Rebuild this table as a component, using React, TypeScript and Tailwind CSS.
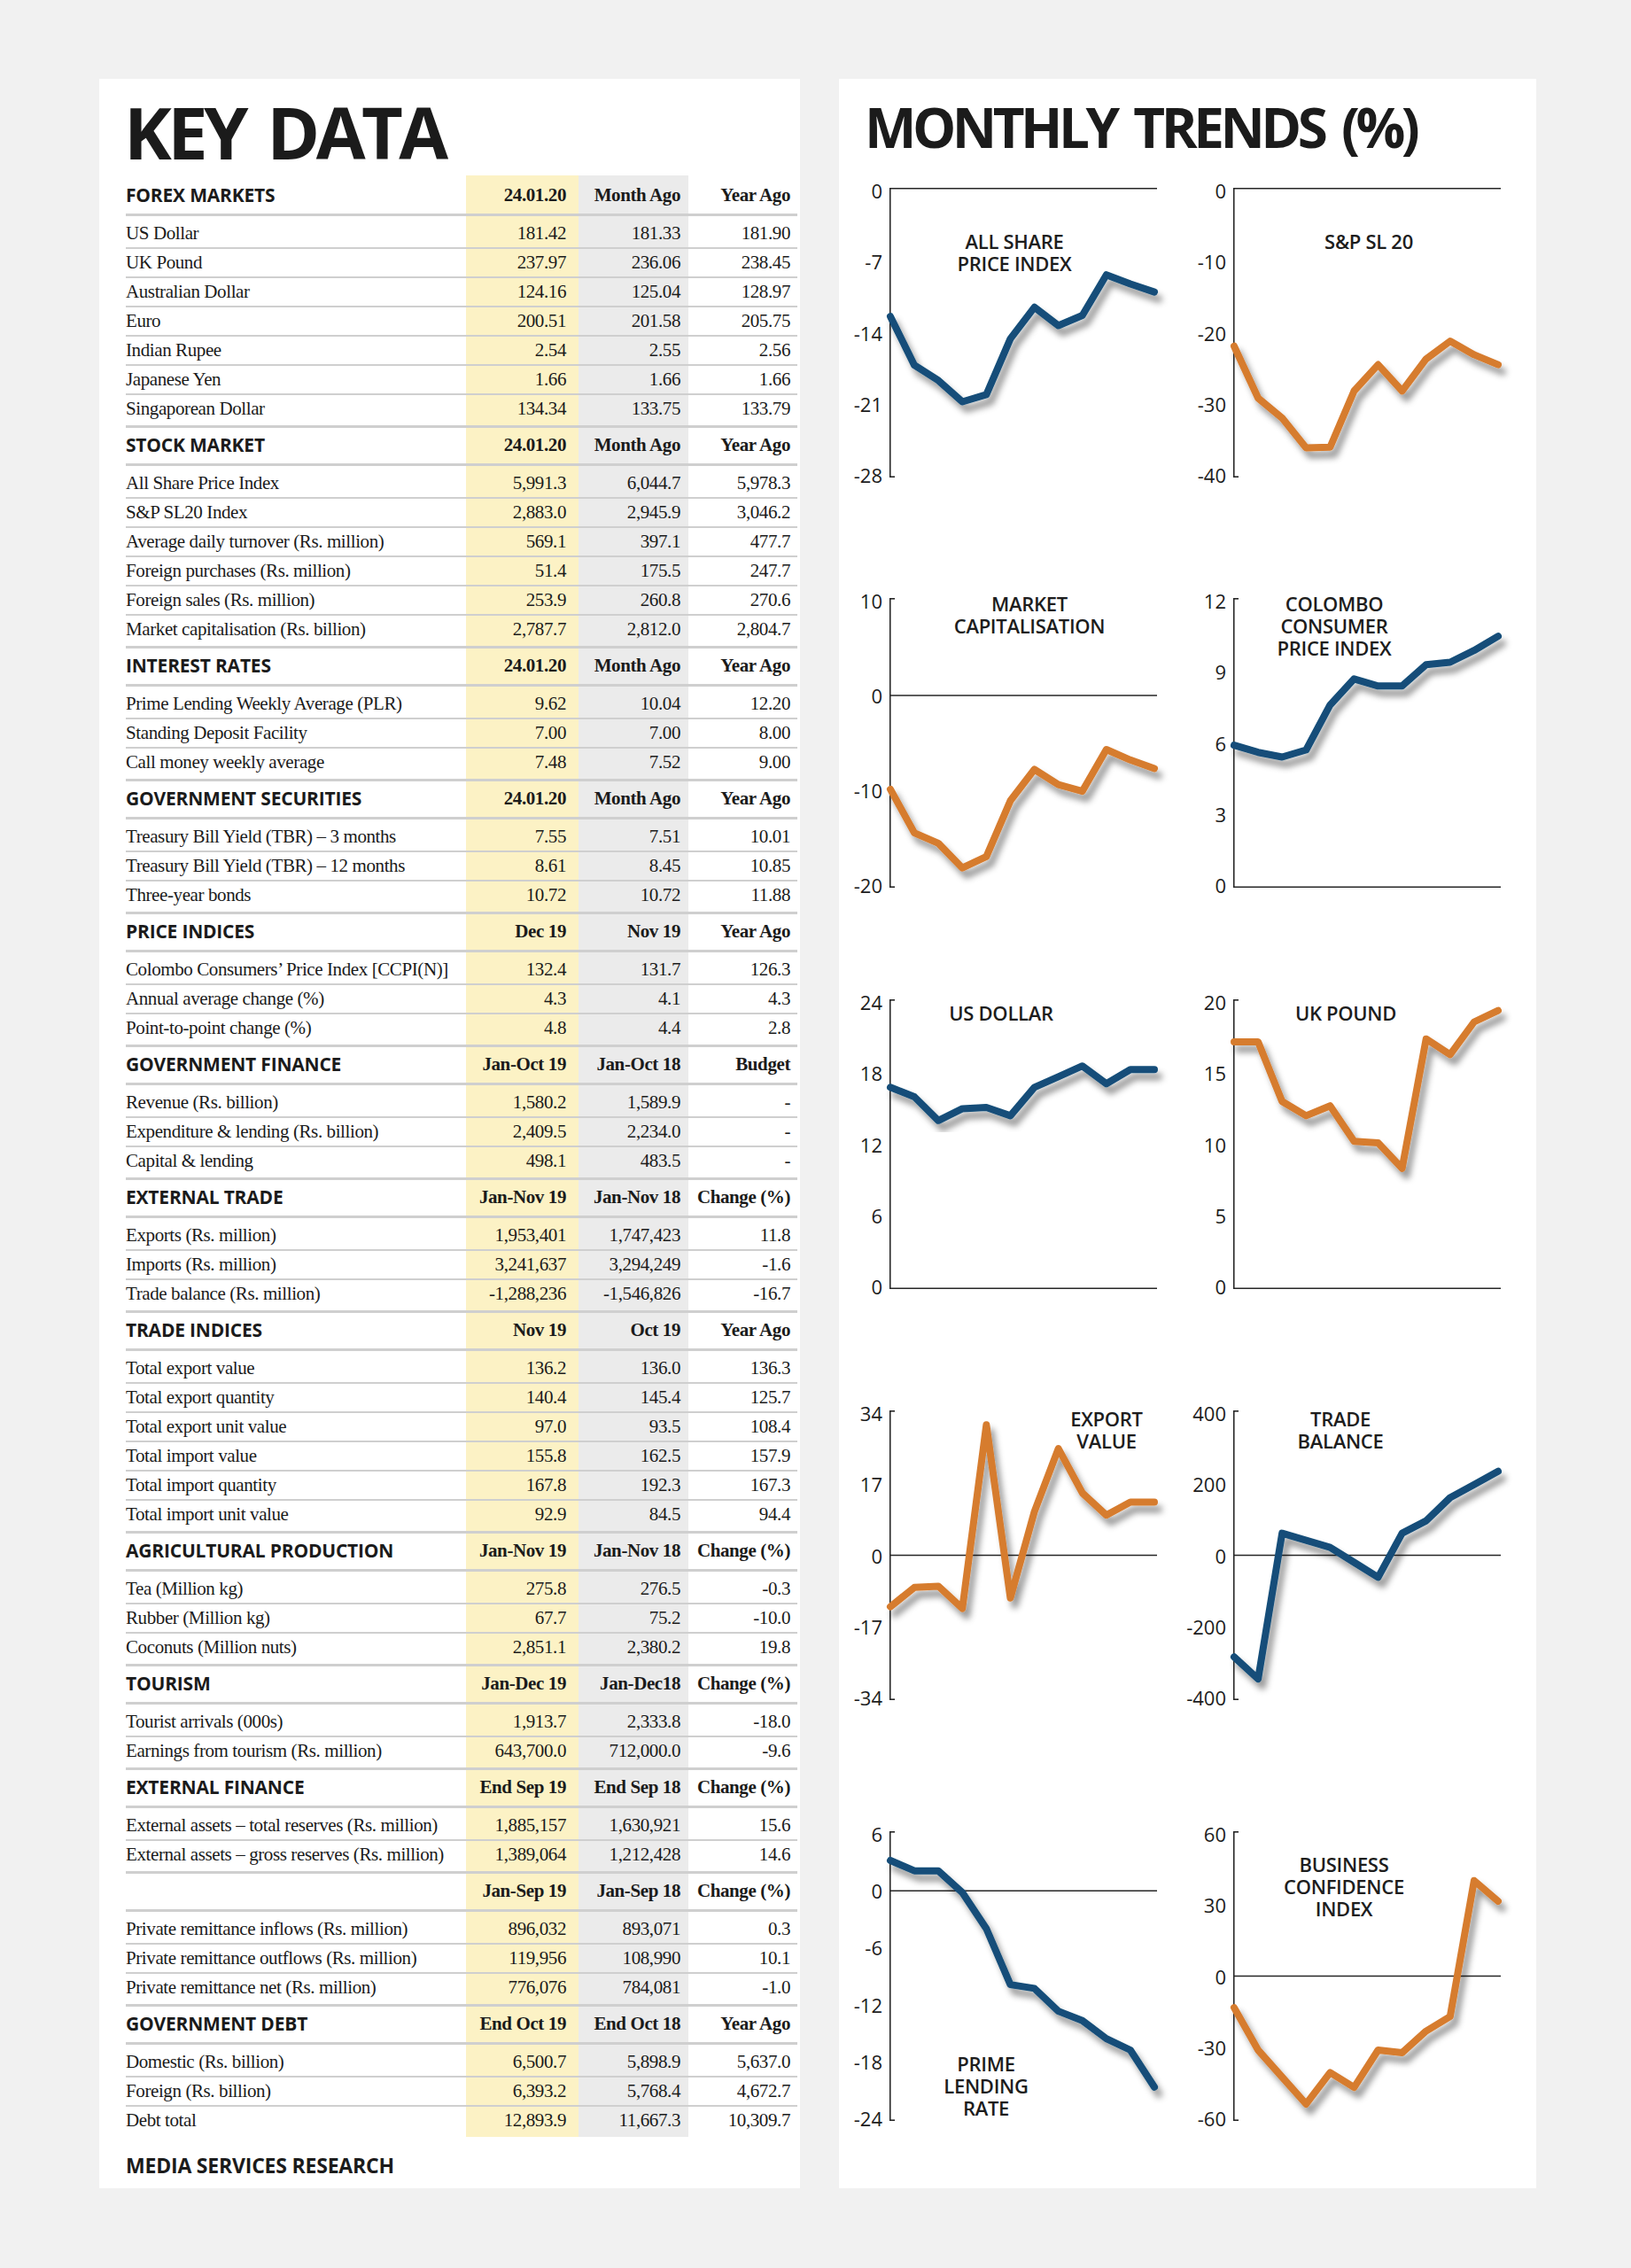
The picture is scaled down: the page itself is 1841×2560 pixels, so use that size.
import React from 'react';

type Row = [string, string, string, string];

interface Section {
  title: string;
  cols: [string, string, string];
  rows: Row[];
}

interface Trend {
  title: string[];
  tx: number;
  ty: number;
  ticks: number[];
  color: string;
  values: number[];
}

const BLUE = '#134e79';
const ORANGE = '#d67b2e';

const SECTIONS: Section[] = [
  {
    title: 'FOREX MARKETS',
    cols: ['24.01.20', 'Month Ago', 'Year Ago'],
    rows: [
      ['US Dollar', '181.42', '181.33', '181.90'],
      ['UK Pound', '237.97', '236.06', '238.45'],
      ['Australian Dollar', '124.16', '125.04', '128.97'],
      ['Euro', '200.51', '201.58', '205.75'],
      ['Indian Rupee', '2.54', '2.55', '2.56'],
      ['Japanese Yen', '1.66', '1.66', '1.66'],
      ['Singaporean Dollar', '134.34', '133.75', '133.79'],
    ],
  },
  {
    title: 'STOCK MARKET',
    cols: ['24.01.20', 'Month Ago', 'Year Ago'],
    rows: [
      ['All Share Price Index', '5,991.3', '6,044.7', '5,978.3'],
      ['S&P SL20 Index', '2,883.0', '2,945.9', '3,046.2'],
      ['Average daily turnover (Rs. million)', '569.1', '397.1', '477.7'],
      ['Foreign purchases (Rs. million)', '51.4', '175.5', '247.7'],
      ['Foreign sales (Rs. million)', '253.9', '260.8', '270.6'],
      ['Market capitalisation (Rs. billion)', '2,787.7', '2,812.0', '2,804.7'],
    ],
  },
  {
    title: 'INTEREST RATES',
    cols: ['24.01.20', 'Month Ago', 'Year Ago'],
    rows: [
      ['Prime Lending Weekly Average (PLR)', '9.62', '10.04', '12.20'],
      ['Standing Deposit Facility', '7.00', '7.00', '8.00'],
      ['Call money weekly average', '7.48', '7.52', '9.00'],
    ],
  },
  {
    title: 'GOVERNMENT SECURITIES',
    cols: ['24.01.20', 'Month Ago', 'Year Ago'],
    rows: [
      ['Treasury Bill Yield (TBR) – 3 months', '7.55', '7.51', '10.01'],
      ['Treasury Bill Yield (TBR) – 12 months', '8.61', '8.45', '10.85'],
      ['Three-year bonds', '10.72', '10.72', '11.88'],
    ],
  },
  {
    title: 'PRICE INDICES',
    cols: ['Dec 19', 'Nov 19', 'Year Ago'],
    rows: [
      ['Colombo Consumers’ Price Index [CCPI(N)]', '132.4', '131.7', '126.3'],
      ['Annual average change (%)', '4.3', '4.1', '4.3'],
      ['Point-to-point change (%)', '4.8', '4.4', '2.8'],
    ],
  },
  {
    title: 'GOVERNMENT FINANCE',
    cols: ['Jan-Oct 19', 'Jan-Oct 18', 'Budget'],
    rows: [
      ['Revenue (Rs. billion)', '1,580.2', '1,589.9', '-'],
      ['Expenditure & lending (Rs. billion)', '2,409.5', '2,234.0', '-'],
      ['Capital & lending', '498.1', '483.5', '-'],
    ],
  },
  {
    title: 'EXTERNAL TRADE',
    cols: ['Jan-Nov 19', 'Jan-Nov 18', 'Change (%)'],
    rows: [
      ['Exports (Rs. million)', '1,953,401', '1,747,423', '11.8'],
      ['Imports (Rs. million)', '3,241,637', '3,294,249', '-1.6'],
      ['Trade balance (Rs. million)', '-1,288,236', '-1,546,826', '-16.7'],
    ],
  },
  {
    title: 'TRADE INDICES',
    cols: ['Nov 19', 'Oct 19', 'Year Ago'],
    rows: [
      ['Total export value', '136.2', '136.0', '136.3'],
      ['Total export quantity', '140.4', '145.4', '125.7'],
      ['Total export unit value', '97.0', '93.5', '108.4'],
      ['Total import value', '155.8', '162.5', '157.9'],
      ['Total import quantity', '167.8', '192.3', '167.3'],
      ['Total import unit value', '92.9', '84.5', '94.4'],
    ],
  },
  {
    title: 'AGRICULTURAL PRODUCTION',
    cols: ['Jan-Nov 19', 'Jan-Nov 18', 'Change (%)'],
    rows: [
      ['Tea (Million kg)', '275.8', '276.5', '-0.3'],
      ['Rubber (Million kg)', '67.7', '75.2', '-10.0'],
      ['Coconuts (Million nuts)', '2,851.1', '2,380.2', '19.8'],
    ],
  },
  {
    title: 'TOURISM',
    cols: ['Jan-Dec 19', 'Jan-Dec18', 'Change (%)'],
    rows: [
      ['Tourist arrivals (000s)', '1,913.7', '2,333.8', '-18.0'],
      ['Earnings from tourism (Rs. million)', '643,700.0', '712,000.0', '-9.6'],
    ],
  },
  {
    title: 'EXTERNAL FINANCE',
    cols: ['End Sep 19', 'End Sep 18', 'Change (%)'],
    rows: [
      ['External assets – total reserves (Rs. million)', '1,885,157', '1,630,921', '15.6'],
      ['External assets – gross reserves (Rs. million)', '1,389,064', '1,212,428', '14.6'],
    ],
  },
  {
    title: '',
    cols: ['Jan-Sep 19', 'Jan-Sep 18', 'Change (%)'],
    rows: [
      ['Private remittance inflows (Rs. million)', '896,032', '893,071', '0.3'],
      ['Private remittance outflows (Rs. million)', '119,956', '108,990', '10.1'],
      ['Private remittance net (Rs. million)', '776,076', '784,081', '-1.0'],
    ],
  },
  {
    title: 'GOVERNMENT DEBT',
    cols: ['End Oct 19', 'End Oct 18', 'Year Ago'],
    rows: [
      ['Domestic (Rs. billion)', '6,500.7', '5,898.9', '5,637.0'],
      ['Foreign (Rs. billion)', '6,393.2', '5,768.4', '4,672.7'],
      ['Debt total', '12,893.9', '11,667.3', '10,309.7'],
    ],
  },
];

// two charts per row, left then right
const TRENDS: Trend[][] = [
  [
    {
      title: ['ALL SHARE', 'PRICE INDEX'], tx: 198, ty: 48, ticks: [0, -7, -14, -21, -28], color: BLUE,
      values: [-12.4, -17.2, -18.7, -20.8, -20.1, -14.6, -11.5, -13.3, -12.3, -8.3, -9.2, -10.0],
    },
    {
      title: ['S&P SL 20'], tx: 210, ty: 48, ticks: [0, -10, -20, -30, -40], color: ORANGE,
      values: [-21.9, -29.2, -32.0, -36.2, -36.1, -28.2, -24.5, -28.2, -23.7, -21.2, -23.1, -24.5],
    },
  ],
  [
    {
      title: ['MARKET', 'CAPITALISATION'], tx: 215, ty: -6, ticks: [10, 0, -10, -20], color: ORANGE,
      values: [-9.9, -14.5, -15.6, -18.2, -17.0, -11.1, -7.8, -9.4, -10.1, -5.7, -6.8, -7.7],
    },
    {
      title: ['COLOMBO', 'CONSUMER', 'PRICE INDEX'], tx: 171, ty: -6, ticks: [12, 9, 6, 3, 0], color: BLUE,
      values: [5.9, 5.6, 5.4, 5.7, 7.6, 8.7, 8.4, 8.4, 9.3, 9.4, 9.9, 10.5],
    },
  ],
  [
    {
      title: ['US DOLLAR'], tx: 183, ty: 3, ticks: [24, 18, 12, 6, 0], color: BLUE,
      values: [16.8, 16.0, 14.0, 15.0, 15.1, 14.4, 16.8, 17.7, 18.6, 17.1, 18.3, 18.3],
    },
    {
      title: ['UK POUND'], tx: 184, ty: 3, ticks: [20, 15, 10, 5, 0], color: ORANGE,
      values: [17.2, 17.2, 13.0, 12.0, 12.7, 10.2, 10.1, 8.3, 17.4, 16.3, 18.6, 19.4],
    },
  ],
  [
    {
      title: ['EXPORT', 'VALUE'], tx: 302, ty: -3, ticks: [34, 17, 0, -17, -34], color: ORANGE,
      values: [-12.3, -7.7, -7.4, -12.7, 31.2, -10.2, 10.4, 25.5, 14.9, 9.6, 12.7, 12.7],
    },
    {
      title: ['TRADE', 'BALANCE'], tx: 178, ty: -3, ticks: [400, 200, 0, -200, -400], color: BLUE,
      values: [-286, -348, 62, 42, 22, -20, -62, 62, 97, 162, 199, 236],
    },
  ],
  [
    {
      title: ['PRIME', 'LENDING', 'RATE'], tx: 166, ty: 250, ticks: [6, 0, -6, -12, -18, -24], color: BLUE,
      values: [3.2, 2.1, 2.1, -0.2, -4.0, -9.9, -10.3, -12.7, -13.7, -15.6, -16.8, -20.7],
    },
    {
      title: ['BUSINESS', 'CONFIDENCE', 'INDEX'], tx: 182, ty: 25, ticks: [60, 30, 0, -30, -60], color: ORANGE,
      values: [-13.3, -31.2, -42.6, -54, -40.7, -47, -31.2, -32.3, -23.2, -17.1, 40.3, 31.6],
    },
  ],
];

const ROW_HEIGHTS = ['h-[463px]', 'h-[453px]', 'h-[464px]', 'h-[475px]', 'flex-1'];

const AXIS_X = 57;
const PLOT_W = 298;
const AXIS_H = 327;

function TrendChart({ chart, id }: { chart: Trend; id: string }) {
  const max = chart.ticks[0];
  const min = chart.ticks[chart.ticks.length - 1];
  const y = (v: number) => 3 + ((max - v) / (max - min)) * 321;

  const step = PLOT_W / (chart.values.length - 1);
  const points = chart.values.map((v, i) => `${AXIS_X + 1 + i * step},${y(v).toFixed(1)}`).join(' ');

  let zeroY: number | null = null;
  if (min <= 0 && max >= 0) zeroY = max === 0 ? 0.75 : min === 0 ? AXIS_H - 0.75 : y(0);

  return (
    <div className="relative w-[388px] h-[327px] text-[#1d1d1d]">
      <svg width={388} height={360} className="absolute left-0 top-0 overflow-visible">
        <defs>
          <filter id={id} x="-10%" y="-10%" width="130%" height="130%">
            <feDropShadow dx="5" dy="8" stdDeviation="3.5" floodColor="#000" floodOpacity="0.4" />
          </filter>
        </defs>
        <line x1={AXIS_X + 0.75} y1={0} x2={AXIS_X + 0.75} y2={AXIS_H} stroke="#262626" strokeWidth={1.6} />
        {max !== 0 && <line x1={AXIS_X} y1={0.8} x2={AXIS_X + 6} y2={0.8} stroke="#262626" strokeWidth={1.6} />}
        {min !== 0 && (
          <line x1={AXIS_X} y1={AXIS_H - 0.8} x2={AXIS_X + 6} y2={AXIS_H - 0.8} stroke="#262626" strokeWidth={1.6} />
        )}
        {zeroY !== null && (
          <line x1={AXIS_X} y1={zeroY} x2={AXIS_X + 302} y2={zeroY} stroke="#262626" strokeWidth={1.6} />
        )}
        <polyline
          points={points}
          fill="none"
          stroke={chart.color}
          strokeWidth={8}
          strokeLinejoin="round"
          strokeLinecap="round"
          filter={`url(#${id})`}
        />
      </svg>

      {chart.ticks.map((t) => (
        <div
          key={t}
          className="absolute right-[339px] -translate-y-1/2 text-[22px] leading-none font-['Open_Sans',sans-serif]"
          style={{ top: y(t) }}
        >
          {t}
        </div>
      ))}

      <div
        className="absolute -translate-x-1/2 text-center whitespace-nowrap text-[22px] leading-[25px] font-semibold font-['Open_Sans',sans-serif] tracking-[-0.3px]"
        style={{ left: chart.tx, top: chart.ty }}
      >
        {chart.title.map((line) => (
          <div key={line}>{line}</div>
        ))}
      </div>
    </div>
  );
}

function TableSection({ section, last }: { section: Section; last: boolean }) {
  const n = section.rows.length;
  return (
    <div>
      <div className="grid h-[43px] grid-cols-[384px_127px_124px_123px] items-center border-b-[3px] border-[#cfcfcf]">
        <div className="font-['Open_Sans',sans-serif] text-[21px] font-bold tracking-[-0.2px]">{section.title}</div>
        <div className="pr-[14px] text-right font-bold">{section.cols[0]}</div>
        <div className="pr-[9px] text-right font-bold">{section.cols[1]}</div>
        <div className="pr-[8px] text-right font-bold">{section.cols[2]}</div>
      </div>
      {section.rows.map((r, i) => {
        let rowCls = 'h-[33px] border-b-2';
        if (i === 0) rowCls = 'h-[37px] pt-[4px] border-b-2';
        if (i === n - 1) rowCls = last ? 'h-[34px] pb-[3px]' : 'h-[37px] pb-[3px] border-b-[3px]';
        return (
          <div
            key={r[0]}
            className={`grid grid-cols-[384px_127px_124px_123px] items-center border-[#cfcfcf] ${rowCls}`}
          >
            <div className="whitespace-nowrap">{r[0]}</div>
            <div className="pr-[14px] text-right">{r[1]}</div>
            <div className="pr-[9px] text-right">{r[2]}</div>
            <div className="pr-[8px] text-right">{r[3]}</div>
          </div>
        );
      })}
    </div>
  );
}

export default function App() {
  return (
    <div className="flex min-h-[2560px] w-full gap-[44px] bg-[#f1f1f1] pl-[112px] pt-[89px] text-[#1b1b1b] items-start">
      {/* Left: key data table */}
      <div className="w-[791px] bg-white pb-[14px] pl-[30px] pr-[3px] pt-[19px]">
        <h1 className="-ml-[2px] mb-[9px] h-[81px] font-['Open_Sans',sans-serif] text-[81px] font-bold leading-none tracking-[-4.6px] [word-spacing:9px]">
          KEY DATA
        </h1>

        <div className="bg-[linear-gradient(to_right,transparent_384px,#fcf2c5_384px,#fcf2c5_511px,#ebebeb_511px,#ebebeb_635px,transparent_635px)] pt-[3px] font-['Liberation_Serif',serif] text-[21px] tracking-[-0.4px]">
          {SECTIONS.map((s, i) => (
            <TableSection key={s.cols.join() + s.title} section={s} last={i === SECTIONS.length - 1} />
          ))}
        </div>

        <div className="mt-[21px] h-[23px] font-['Open_Sans',sans-serif] text-[23px] font-bold leading-none tracking-[-0.2px]">
          MEDIA SERVICES RESEARCH
        </div>
      </div>

      {/* Right: monthly trend charts */}
      <div className="flex h-[2381px] w-[787px] flex-col bg-white pt-[23px]">
        <h2 className="ml-[29px] h-[63px] font-['Open_Sans',sans-serif] text-[62px] font-bold leading-none tracking-[-4.5px] [word-spacing:8px]">
          MONTHLY TRENDS (%)
        </h2>
        <div className="mt-[25px] flex flex-1 flex-col">
          {TRENDS.map((pair, r) => (
            <div key={r} className={`flex pt-[12px] ${ROW_HEIGHTS[r]}`}>
              {pair.map((c, j) => (
                <TrendChart key={j} chart={c} id={`shadow-${r}-${j}`} />
              ))}
            </div>
          ))}
        </div>
      </div>
    </div>
  );
}
